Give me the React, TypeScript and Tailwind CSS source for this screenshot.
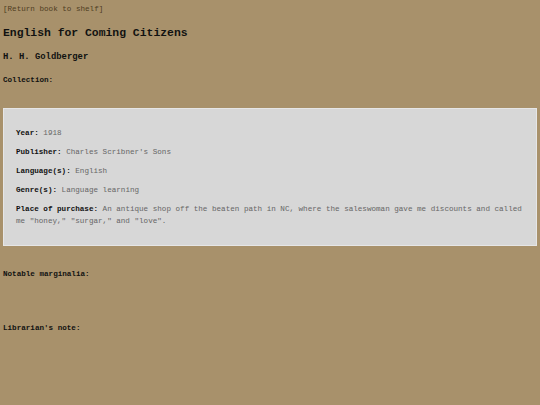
import React from "react";

const mono = { fontFamily: '"Courier New", Courier, "Nimbus Mono PS", "Nimbus Mono L", FreeMono, "Liberation Mono", monospace' };

function Field({ label, value }: { label: string; value: string }) {
  return (
    <p className="text-[7.6px] leading-[12px] mb-[7px] last:mb-0">
      <span className="font-bold text-[#111]">{label}:</span>{" "}
      <span className="text-[#666]">{value}</span>
    </p>
  );
}

export default function App() {
  return (
    <div className="min-h-[405px] w-full bg-[#a8916b] px-[3px] pt-[5px]" style={mono}>
      <a className="block text-[7.6px] leading-[9px] text-[#4f3d22]">[Return book to shelf]</a>
      <h2 className="mt-[12.5px] text-[11.4px] leading-[13px] font-bold text-[#111]">
        English for Coming Citizens
      </h2>
      <h3 className="mt-[12.5px] text-[8.9px] leading-[10px] font-bold text-[#111]">H. H. Goldberger</h3>
      <h4 className="mt-[13.5px] text-[7.6px] leading-[9px] font-bold text-[#111]">Collection:</h4>
      <div className="mt-[23px] w-[534px] border border-[#e6e6e6] bg-[#d7d7d7] px-[12px] pt-[18px] pb-[18.5px]">
        <Field label="Year" value="1918" />
        <Field label="Publisher" value="Charles Scribner's Sons" />
        <Field label="Language(s)" value="English" />
        <Field label="Genre(s)" value="Language learning" />
        <Field
          label="Place of purchase"
          value={'An antique shop off the beaten path in NC, where the saleswoman gave me discounts and called me "honey," "surgar," and "love".'}
        />
      </div>
      <h4 className="mt-[23.5px] text-[7.6px] leading-[9px] font-bold text-[#111]">Notable marginalia:</h4>
      <h4 className="mt-[45px] text-[7.6px] leading-[9px] font-bold text-[#111]">Librarian's note:</h4>
    </div>
  );
}
